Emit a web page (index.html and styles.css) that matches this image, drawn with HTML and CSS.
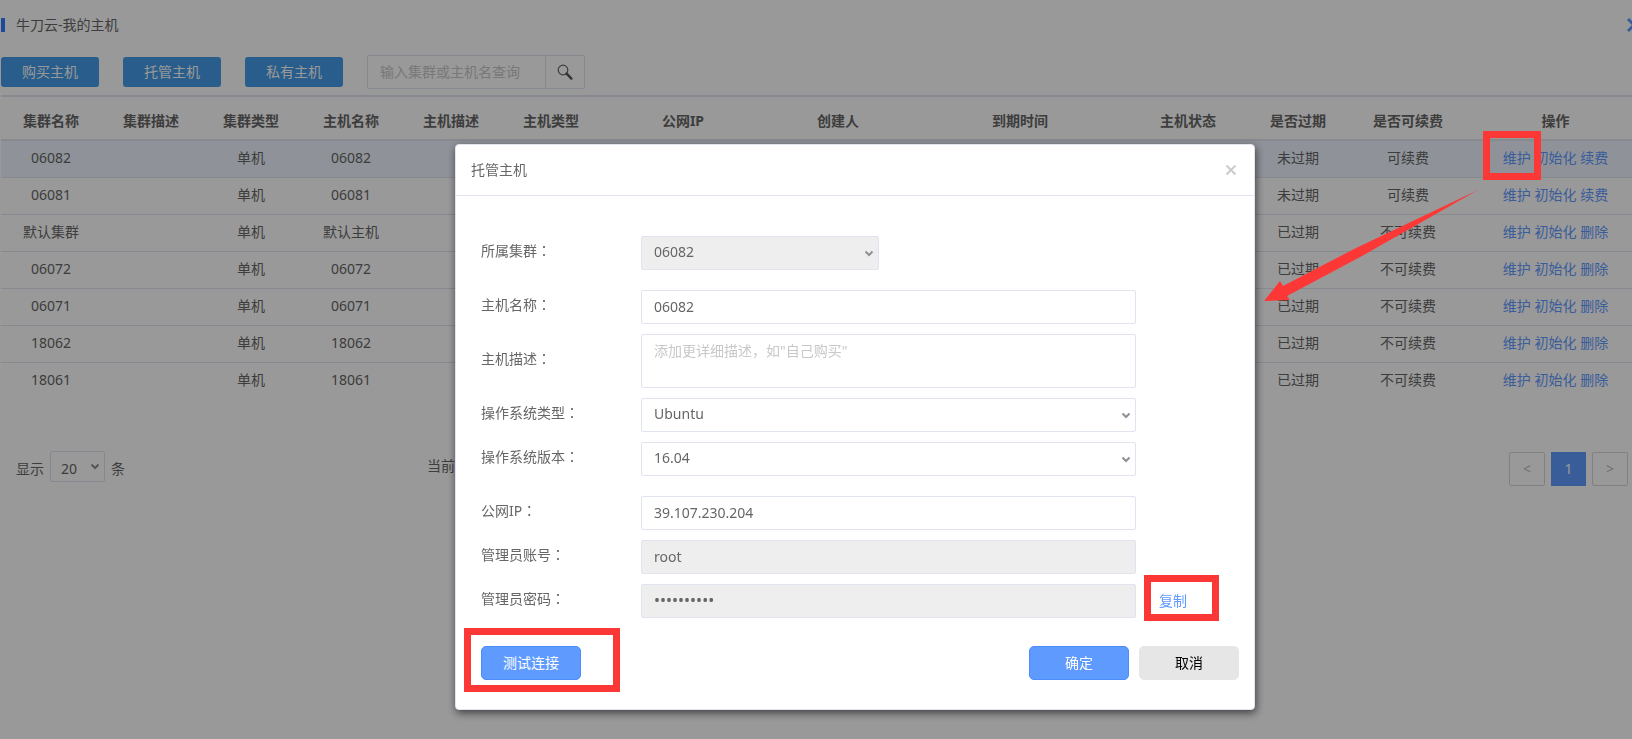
FILE: index.html
```html
<!DOCTYPE html>
<html lang="zh-CN">
<head>
<meta charset="utf-8">
<title>牛刀云-我的主机</title>
<link rel="stylesheet" href="styles.css">
</head>
<body>
<main class="page">
  <header class="page-head">
    <h1 class="page-title">牛刀云-我的主机</h1>
    <button class="page-close" type="button" aria-label="关闭页面"><svg width="16" height="16" viewBox="0 0 16 16"><path d="M2 2L14 14M14 2L2 14"/></svg></button>
  </header>
  <div class="toolbar">
    <button class="tool-btn" type="button">购买主机</button>
    <button class="tool-btn" type="button">托管主机</button>
    <button class="tool-btn" type="button">私有主机</button>
    <form class="search">
      <input class="search-input" type="text" placeholder="输入集群或主机名查询" aria-label="输入集群或主机名查询">
      <button class="search-btn" type="button" aria-label="查询"><svg width="16" height="16" viewBox="0 0 16 16"><circle cx="6" cy="6" r="4.8" fill="none" stroke="#666" stroke-width="1.2"/><path d="M9.6 9.6L14.4 14.6" stroke="#555" stroke-width="2.4" stroke-linecap="round"/></svg></button>
    </form>
  </div>
  <table class="hosts">
    <colgroup><col class="c-base"><col class="c-base"><col class="c-base"><col class="c-base"><col class="c-base"><col class="c-base"><col class="c-ip"><col class="c-user"><col class="c-date"><col class="c-state"><col class="c-expired"><col class="c-renew"><col></colgroup>
    <thead>
      <tr><th>集群名称</th><th>集群描述</th><th>集群类型</th><th>主机名称</th><th>主机描述</th><th>主机类型</th><th>公网IP</th><th>创建人</th><th>到期时间</th><th>主机状态</th><th>是否过期</th><th>是否可续费</th><th>操作</th></tr>
    </thead>
    <tbody>
      <tr class="current"><td>06082</td><td></td><td>单机</td><td>06082</td><td></td><td></td><td></td><td></td><td></td><td></td><td>未过期</td><td>可续费</td><td><a href="#">维护</a> <a href="#">初始化</a> <a href="#">续费</a></td></tr>
      <tr><td>06081</td><td></td><td>单机</td><td>06081</td><td></td><td></td><td></td><td></td><td></td><td></td><td>未过期</td><td>可续费</td><td><a href="#">维护</a> <a href="#">初始化</a> <a href="#">续费</a></td></tr>
      <tr><td>默认集群</td><td></td><td>单机</td><td>默认主机</td><td></td><td></td><td></td><td></td><td></td><td></td><td>已过期</td><td>不可续费</td><td><a href="#">维护</a> <a href="#">初始化</a> <a href="#">删除</a></td></tr>
      <tr><td>06072</td><td></td><td>单机</td><td>06072</td><td></td><td></td><td></td><td></td><td></td><td></td><td>已过期</td><td>不可续费</td><td><a href="#">维护</a> <a href="#">初始化</a> <a href="#">删除</a></td></tr>
      <tr><td>06071</td><td></td><td>单机</td><td>06071</td><td></td><td></td><td></td><td></td><td></td><td></td><td>已过期</td><td>不可续费</td><td><a href="#">维护</a> <a href="#">初始化</a> <a href="#">删除</a></td></tr>
      <tr><td>18062</td><td></td><td>单机</td><td>18062</td><td></td><td></td><td></td><td></td><td></td><td></td><td>已过期</td><td>不可续费</td><td><a href="#">维护</a> <a href="#">初始化</a> <a href="#">删除</a></td></tr>
      <tr><td>18061</td><td></td><td>单机</td><td>18061</td><td></td><td></td><td></td><td></td><td></td><td></td><td>已过期</td><td>不可续费</td><td><a href="#">维护</a> <a href="#">初始化</a> <a href="#">删除</a></td></tr>
    </tbody>
  </table>
  <footer class="list-foot">
    <div class="page-size"><label for="size">显示</label><select class="size-select" id="size"><option>20</option></select><span>条</span></div>
    <span class="range">当前</span>
    <nav class="pager" aria-label="分页">
      <button class="pager-btn" type="button">&lt;</button>
      <button class="pager-btn pager-on" type="button">1</button>
      <button class="pager-btn" type="button">&gt;</button>
    </nav>
  </footer>
</main>

<div class="backdrop">
  <section class="dialog" role="dialog" aria-labelledby="dialog-title">
    <header class="dialog-head">
      <h2 class="dialog-title" id="dialog-title">托管主机</h2>
      <button class="dialog-close" type="button" aria-label="关闭"><svg width="12" height="12" viewBox="0 0 12 12"><path d="M1.5 1.5L10.5 10.5M10.5 1.5L1.5 10.5"/></svg></button>
    </header>
    <form class="dialog-form">
      <div class="field field-gap">
        <label for="cluster">所属集群<span class="colon" lang="zh-TW">：</span></label>
        <select class="control control-short" id="cluster" disabled><option>06082</option></select>
      </div>
      <div class="field">
        <label for="name">主机名称<span class="colon" lang="zh-TW">：</span></label>
        <input class="control" id="name" type="text" value="06082">
      </div>
      <div class="field">
        <label for="desc">主机描述<span class="colon" lang="zh-TW">：</span></label>
        <textarea class="control control-area" id="desc" placeholder="添加更详细描述，如&quot;自己购买&quot;"></textarea>
      </div>
      <div class="field">
        <label for="os">操作系统类型<span class="colon" lang="zh-TW">：</span></label>
        <select class="control" id="os"><option>Ubuntu</option></select>
      </div>
      <div class="field field-gap">
        <label for="version">操作系统版本<span class="colon" lang="zh-TW">：</span></label>
        <select class="control" id="version"><option>16.04</option></select>
      </div>
      <div class="field">
        <label for="ip">公网IP<span class="colon" lang="zh-TW">：</span></label>
        <input class="control" id="ip" type="text" value="39.107.230.204">
      </div>
      <div class="field">
        <label for="account">管理员账号<span class="colon" lang="zh-TW">：</span></label>
        <input class="control" id="account" type="text" value="root" disabled>
      </div>
      <div class="field">
        <label for="password">管理员密码<span class="colon" lang="zh-TW">：</span></label>
        <input class="control control-secret" id="password" type="password" value="0123456789" disabled>
        <span class="copy"><a href="#">复制</a><i class="mark mark-copy"></i></span>
      </div>
      <div class="actions">
        <span class="test"><button class="btn btn-primary" type="button">测试连接</button><i class="mark mark-test"></i></span>
        <button class="btn btn-primary" type="button">确定</button>
        <button class="btn btn-plain" type="button">取消</button>
      </div>
    </form>
  </section>
  <i class="mark mark-maintain"></i>
  <svg class="arrow" width="216" height="114" viewBox="0 0 216 114"><path d="M0 112L16 92L19 97L90 60L214 1L98 67L23 107L26 111Z"/></svg>
</div>
</body>
</html>
```

FILE: styles.css
```css
* {
  box-sizing: border-box;
}

body {
  margin: 0;
  background: #fff;
  color: #666;
  font: 14px/20px "Noto Sans", "Noto Sans CJK SC", sans-serif;
  overflow: hidden;
}

button, input, select, textarea {
  font: inherit;
  color: inherit;
  margin: 0;
}

button {
  padding: 0;
  cursor: pointer;
}

a {
  color: #5f9bff;
  text-decoration: none;
}

h1, h2 {
  margin: 0;
  font-size: 14px;
  font-weight: 400;
}

.page {
  min-height: 100vh;
  padding-left: 1px;
  overflow: hidden;
}

.page-head {
  display: flex;
  align-items: center;
  justify-content: space-between;
  height: 50px;
  margin-right: -10px;
}

.page-title {
  padding-left: 11px;
  border-left: 4px solid #2f7bff;
  line-height: 14px;
}

.page-close {
  display: flex;
  border: 0;
  background: none;
}

.page-close path {
  stroke: #5f9bff;
  stroke-width: 3;
}

.toolbar {
  display: flex;
  align-items: center;
  gap: 24px;
  padding: 5px 0 6px;
}

.tool-btn {
  width: 98px;
  height: 30px;
  border: 0;
  border-radius: 3px;
  background: #439bea;
  color: #fff;
}

.search {
  display: flex;
  width: 218px;
  height: 34px;
  border: 1px solid #dfe3f0;
  border-radius: 2px;
}

.search-input {
  flex: 1;
  min-width: 0;
  padding: 0 12px;
  border: 0;
  background: none;
}

.search-btn {
  display: flex;
  align-items: center;
  justify-content: center;
  width: 39px;
  border: 0;
  border-left: 1px solid #dfe3f0;
  background: none;
}

::placeholder {
  color: #c8c8c8;
  opacity: 1;
}

.hosts {
  width: calc(100% + 12px);
  table-layout: fixed;
  border-spacing: 0;
  border-top: 2px solid #dfe4f0;
  text-align: center;
  white-space: nowrap;
}

.c-base { width: 100px; }
.c-ip { width: 164px; }
.c-user { width: 146px; }
.c-date { width: 218px; }
.c-state { width: 118px; }
.c-expired { width: 102px; }
.c-renew { width: 118px; }

.hosts th {
  padding: 14px 0 8px;
  border-bottom: 2px solid #dfe4f0;
  font-weight: 700;
}

.hosts td {
  height: 37px;
  padding: 0 0 2px;
  border-bottom: 1px solid #dfe4f0;
}

.hosts tbody tr:last-child td {
  height: 36px;
  border-bottom: 0;
}

.current {
  background: #eef5ff;
}

.list-foot {
  display: flex;
  align-items: center;
  padding: 52px 4px 0 15px;
}

.page-size {
  display: flex;
  align-items: center;
  gap: 6px;
  width: 411px;
}

.range {
  padding-bottom: 6px;
}

select {
  appearance: none;
  background: url("data:image/svg+xml,%3Csvg xmlns='http://www.w3.org/2000/svg' width='8' height='7'%3E%3Cpath d='M0.5 1.5L4 5L7.5 1.5' fill='none' stroke='%23909090' stroke-width='2'/%3E%3C/svg%3E") no-repeat right 5px center;
}

.size-select {
  width: 55px;
  height: 31px;
  margin-bottom: 4px;
  padding: 4px 10px 0;
  border: 1px solid #dfe3f0;
  border-radius: 2px;
}

.pager {
  display: flex;
  gap: 6px;
  margin-left: auto;
}

.pager-btn {
  width: 36px;
  height: 34px;
  border: 1px solid #d8d8d8;
  border-radius: 2px;
  background: none;
  color: #bbb;
}

.pager-on {
  width: 35px;
  border: 0;
  border-radius: 0;
  background: #5f9bff;
  color: #fff;
}

.backdrop {
  position: fixed;
  inset: 0;
  padding: 144px 0 0 78px;
  background: rgba(0, 0, 0, 0.4);
}

.dialog {
  width: 800px;
  max-width: 100%;
  margin: 0 auto;
  border: 1px solid #dfe4f0;
  border-radius: 4px;
  background: #fff;
  box-shadow: 1px 3px 9px rgba(0, 0, 0, 0.6);
}

.dialog-head {
  display: flex;
  align-items: center;
  justify-content: space-between;
  height: 51px;
  padding: 0 17px 0 15px;
  border-bottom: 1px solid #dfe4f0;
}

.dialog-close {
  display: flex;
  border: 0;
  background: none;
}

.dialog-close path {
  stroke: #ccc;
  stroke-width: 2;
}

.dialog-form {
  display: flex;
  flex-direction: column;
  gap: 10px;
  padding: 40px 15px 29px 25px;
}

.field {
  display: flex;
  align-items: center;
}

.field-gap {
  margin-bottom: 10px;
}

.field label {
  width: 160px;
  padding-bottom: 6px;
}

.colon {
  font-family: "Noto Sans CJK TC", sans-serif;
}

.control {
  width: 495px;
  height: 34px;
  padding: 0 12px 2px;
  border: 1px solid #dfe4f0;
  border-radius: 2px;
  background-color: #fff;
  outline: 0;
}

.control:disabled {
  background-color: #eee;
  color: #666;
  opacity: 1;
}

.control-short {
  width: 238px;
}

.control-area {
  height: 54px;
  padding-top: 6px;
  resize: none;
}

.control-secret {
  font-size: 16px;
}

.copy,
.test {
  position: relative;
}

.copy {
  margin-left: 23px;
}

.test {
  margin-right: auto;
}

.actions {
  display: flex;
  gap: 10px;
  padding-top: 18px;
}

.btn {
  width: 100px;
  height: 34px;
  border: 1px solid #4a8cfb;
  border-radius: 5px;
}

.btn-primary {
  background: #5f9bff;
  color: #fff;
}

.btn-plain {
  border-color: #e6e6e6;
  background: #e6e6e6;
  color: #000;
}

.mark {
  position: absolute;
  border: 7px solid #fc3836;
  pointer-events: none;
}

.mark-copy {
  top: -16px;
  left: -15px;
  width: 75px;
  height: 46px;
}

.mark-test {
  top: -18px;
  left: -17px;
  width: 156px;
  height: 64px;
}

.mark-maintain {
  top: 131px;
  right: 91px;
  width: 58px;
  height: 49px;
}

.arrow {
  position: absolute;
  top: 189px;
  right: 152px;
  fill: #fc3836;
}
```
